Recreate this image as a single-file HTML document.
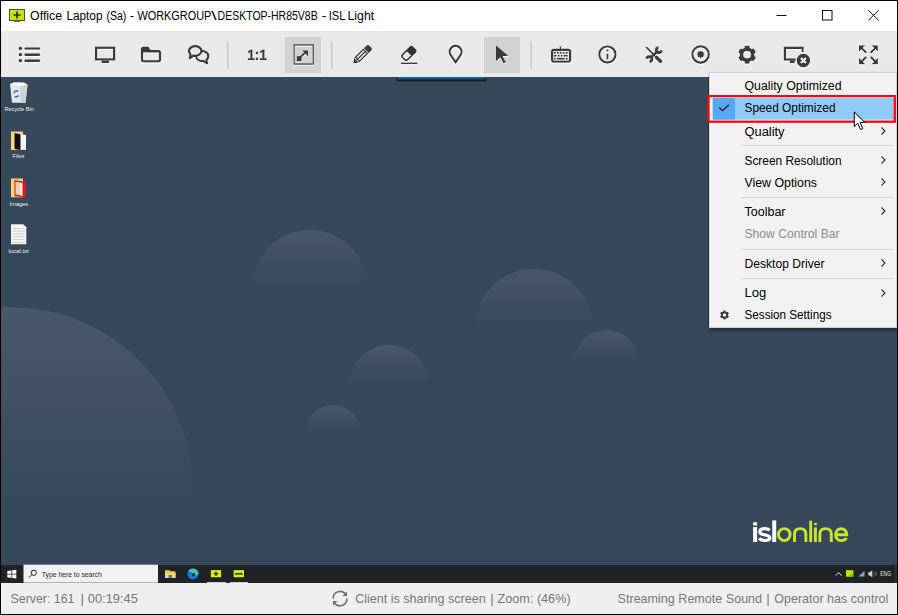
<!DOCTYPE html>
<html><head><meta charset="utf-8">
<style>
*{margin:0;padding:0}
html,body{width:898px;height:615px;overflow:hidden;background:#000}
svg{position:absolute;left:0;top:0;display:block}
text{font-family:"Liberation Sans",sans-serif}
</style></head><body>
<svg width="898" height="615" viewBox="0 0 898 615">
<defs>
  <clipPath id="deskclip"><rect x="1" y="77" width="896" height="488"/></clipPath>
  <linearGradient id="bub" x1="0" y1="0" x2="0" y2="1">
    <stop offset="0" stop-color="#d8d0e8" stop-opacity="0.11"/>
    <stop offset="0.25" stop-color="#d8d0e8" stop-opacity="0.05"/>
    <stop offset="0.5" stop-color="#d8d0e8" stop-opacity="0"/>
  </linearGradient>
  <linearGradient id="bub2" x1="0" y1="0" x2="0" y2="1">
    <stop offset="0" stop-color="#d8d0e8" stop-opacity="0.11"/>
    <stop offset="0.3" stop-color="#d8d0e8" stop-opacity="0.05"/>
    <stop offset="0.55" stop-color="#d8d0e8" stop-opacity="0"/>
  </linearGradient>
  <linearGradient id="bar" x1="0" y1="0" x2="0" y2="1">
    <stop offset="0" stop-color="#1d7bc0"/>
    <stop offset="1" stop-color="#052a48"/>
  </linearGradient>
  <filter id="halo" x="-20%" y="-20%" width="140%" height="140%">
    <feMorphology in="SourceAlpha" operator="dilate" radius="0.4" result="d"/>
    <feOffset in="d" dy="0.9" result="o"/>
    <feGaussianBlur in="o" stdDeviation="0.45" result="b"/>
    <feFlood flood-color="#ffffff" flood-opacity="0.9"/>
    <feComposite in2="b" operator="in" result="w"/>
    <feMerge><feMergeNode in="w"/><feMergeNode in="SourceGraphic"/></feMerge>
  </filter>
  <filter id="shadow" x="-10%" y="-10%" width="130%" height="130%">
    <feGaussianBlur in="SourceAlpha" stdDeviation="1.5"/>
    <feOffset dx="1" dy="2"/>
    <feComponentTransfer><feFuncA type="linear" slope="0.45"/></feComponentTransfer>
    <feMerge><feMergeNode/><feMergeNode in="SourceGraphic"/></feMerge>
  </filter>
</defs>

<!-- ===== TITLE BAR ===== -->
<rect x="1" y="1" width="896" height="30" fill="#ffffff"/>
<g>
  <rect x="9.5" y="9.5" width="15" height="11" fill="#c5e500" stroke="#4a4a4a" stroke-width="1"/>
  <rect x="14" y="20.5" width="6" height="1.3" fill="#4a4a4a"/>
  <path d="M17 11.5v7M13.5 15h7" stroke="#2a2a10" stroke-width="1.6"/>
</g>
<g font-size="12.5" fill="#000">
  <text x="30.1" y="20" textLength="32.0" lengthAdjust="spacingAndGlyphs">Office</text>
  <text x="66.4" y="20" textLength="36.1" lengthAdjust="spacingAndGlyphs">Laptop</text>
  <text x="106.4" y="20" textLength="20.0" lengthAdjust="spacingAndGlyphs">(Sa)</text>
  <text x="129.7" y="20" textLength="4.3" lengthAdjust="spacingAndGlyphs">-</text>
  <text x="137.4" y="20" textLength="74.0" lengthAdjust="spacingAndGlyphs">WORKGROUP</text>
  <text x="211.2" y="20" textLength="5.4" lengthAdjust="spacingAndGlyphs">\</text>
  <text x="217.6" y="20" textLength="100.1" lengthAdjust="spacingAndGlyphs">DESKTOP-HR85V8B</text>
  <text x="321.8" y="20" textLength="4.6" lengthAdjust="spacingAndGlyphs">-</text>
  <text x="328.7" y="20" textLength="16.7" lengthAdjust="spacingAndGlyphs">ISL</text>
  <text x="347.4" y="20" textLength="26.8" lengthAdjust="spacingAndGlyphs">Light</text>
</g>
<g stroke="#111" stroke-width="1" fill="none">
  <path d="M776.5 15.5h10"/>
  <rect x="822.5" y="10.5" width="9.5" height="9.5"/>
  <path d="M868.3 10.2l10.4 10.2M878.7 10.2l-10.4 10.2"/>
</g>

<!-- ===== TOOLBAR ===== -->
<rect x="1" y="31" width="896" height="46" fill="#e9e9e9"/>
<rect x="285" y="37" width="36" height="36" fill="#d2d2d2"/>
<rect x="484" y="37" width="36" height="36" fill="#d2d2d2"/>
<g fill="#c8c8c8">
  <rect x="227" y="41" width="1.5" height="28"/>
  <rect x="331" y="41" width="1.5" height="28"/>
  <rect x="530.5" y="41" width="1.5" height="28"/>
</g>
<g id="icons" filter="url(#halo)" fill="none" stroke="#3a3a3a" stroke-width="2.25">
  <!-- list -->
  <g fill="#3a3a3a" stroke="none">
    <circle cx="20.4" cy="48.6" r="1.75"/><circle cx="20.4" cy="54.7" r="1.75"/><circle cx="20.4" cy="60.8" r="1.75"/>
  </g>
  <path d="M25.5 48.6H39M25.5 54.7H39M25.5 60.8H39" stroke-width="2.4" stroke-linecap="round"/>
  <!-- monitor -->
  <rect x="96.1" y="47.8" width="18" height="11.7"/>
  <rect x="101.5" y="60.4" width="7.5" height="2.6" fill="#3a3a3a" stroke="none"/>
  <!-- folder -->
  <path d="M142 50V49.5Q142 47.8 143.8 47.8H147.8L149.6 51.2H158.2Q160 51.2 160 53V59.6Q160 61.4 158.2 61.4H143.8Q142 61.4 142 59.6Z" stroke-linejoin="round"/>
  <path d="M142 51.5V49.5Q142 47.8 143.8 47.8H147.8L149.6 51.2Z" fill="#3a3a3a" stroke-width="1.6"/>
  <path d="M142 51.6H160" stroke-width="1.8"/>
  <!-- chat -->
  <path d="M202.2 51.2C205.6 51.2 208.3 53.4 208.3 56.2C208.3 57.7 207.6 59 206.4 59.9L207 63.4L203.6 61.1C203.1 61.2 202.7 61.2 202.2 61.2C198.8 61.2 196.1 59 196.1 56.2C196.1 53.4 198.8 51.2 202.2 51.2Z" stroke-linejoin="round"/>
  <path d="M195.2 46.1C198.7 46.1 201.5 48.3 201.5 51C201.5 53.7 198.7 55.9 195.2 55.9C194.5 55.9 193.8 55.8 193.2 55.7L189.9 58.4L190.4 54.3C189.5 53.5 188.9 52.3 188.9 51C188.9 48.3 191.7 46.1 195.2 46.1Z" fill="#e9e9e9" stroke-linejoin="round"/>
  <!-- 1:1 -->
  <text x="247.2" y="60.4" font-size="15.5" font-weight="bold" fill="#3a3a3a" stroke="#3a3a3a" stroke-width="0.5" textLength="19.5" lengthAdjust="spacingAndGlyphs">1:1</text>
  <!-- fit -->
  <rect x="294.1" y="45" width="19.1" height="19.1" stroke="#505050" stroke-width="1.5"/>
  <rect x="296.8" y="56.2" width="4.8" height="5.2" fill="#3a3a3a" stroke="none"/>
  <path d="M300.5 57.2L305 52.7" stroke-width="2"/>
  <path d="M302.2 50.6H308V56.4Z" fill="#3a3a3a" stroke="none"/>
  <!-- pencil -->
  <g transform="translate(353.2 63.6) rotate(-44.5) scale(0.94)">
    <path d="M0 0L5 -3.6V3.6Z" fill="#3a3a3a" stroke="none"/>
    <rect x="6.3" y="-3" width="12" height="6" stroke-width="1.6"/>
    <path d="M6.3 0H18.3" stroke-width="1.6"/>
    <path d="M19.5 -3.7H23.5Q25.6 -3.7 25.6 -1.6V1.6Q25.6 3.7 23.5 3.7H19.5Z" fill="#3a3a3a" stroke="none"/>
  </g>
  <!-- eraser -->
  <g transform="translate(408.9 53.5) rotate(-45)">
    <path d="M0 -4.4H5.6Q7.8 -4.4 7.8 -2.2V2.2Q7.8 4.4 5.6 4.4H0Z" fill="#333" stroke="none"/>
    <path d="M0.5 -3.6H-5.2Q-7.4 -3.6 -7.4 -1.4V1.4Q-7.4 3.6 -5.2 3.6H0.5" stroke-width="1.7"/>
  </g>
  <path d="M401 63.4H417.4" stroke-width="1.5"/>
  <!-- pin -->
  <path d="M455.6 62.5L450.6 55A5.9 5.9 0 1 1 460.6 55Z" stroke-linejoin="round"/>
  <!-- pointer -->
  <path d="M496 45.5L508.2 55.8L502.6 56.3L505.8 62.2L503.5 63.4L500.3 57.4L496 61.2Z" fill="#3a3a3a" stroke="none"/>
  <!-- keyboard -->
  <rect x="552.1" y="49.8" width="18" height="11.9" rx="2"/>
  <path d="M560.4 46.5V49" stroke-width="1.4"/>
  <g fill="#3a3a3a" stroke="none">
    <rect x="553.9" y="51.9" width="1.9" height="1.9"/><rect x="556.9" y="51.9" width="1.9" height="1.9"/><rect x="559.8" y="51.9" width="1.9" height="1.9"/><rect x="562.7" y="51.9" width="1.9" height="1.9"/><rect x="565.8" y="51.9" width="1.9" height="1.9"/>
    <rect x="553.9" y="54.8" width="2.6" height="1.9"/><rect x="557.7" y="54.8" width="1.9" height="1.9"/><rect x="560.7" y="54.8" width="1.9" height="1.9"/><rect x="563.7" y="54.8" width="3.9" height="1.9"/>
    <rect x="553.9" y="57.8" width="1.9" height="1.9"/><rect x="557" y="57.8" width="7.6" height="1.9"/><rect x="565.8" y="57.8" width="1.9" height="1.9"/>
  </g>
  <!-- info -->
  <circle cx="607.4" cy="54.6" r="8.1" stroke-width="2.2"/>
  <circle cx="607.4" cy="50.5" r="1.1" fill="#3a3a3a" stroke="none"/>
  <rect x="606.5" y="53.8" width="1.9" height="5.8" fill="#3a3a3a" stroke="none"/>
  <!-- tools -->
  <path d="M646.6 47.6L654.3 55.3" stroke-width="1.7" stroke-linecap="round"/>
  <path d="M656.3 57.3L660.5 61.5" stroke-width="3.4" stroke-linecap="round"/>
  <path d="M651.2 57.3L656.9 52.1" stroke-width="2.6"/>
  <path d="M661.29 50.43A2.5 2.5 0 1 1 658.57 47.71" stroke-width="2.9"/>
  <path d="M646.81 58.97A2.5 2.5 0 1 1 649.53 61.69" stroke-width="2.9"/>
  <!-- record -->
  <circle cx="700.6" cy="54.6" r="8.2" stroke-width="2.2"/>
  <circle cx="700.6" cy="54.6" r="3.3" fill="#3a3a3a" stroke="none"/>
  <!-- gear -->
  <path fill="#3a3a3a" stroke="none" fill-rule="evenodd" d="M744.48 47.98L744.77 46.11A9.0 9.0 0 0 1 749.43 46.11L749.72 47.98A7.3 7.3 0 0 1 751.69 49.13L751.69 49.13L753.46 48.44A9.0 9.0 0 0 1 755.79 52.47L754.31 53.66A7.3 7.3 0 0 1 754.31 55.94L754.31 55.94L755.79 57.13A9.0 9.0 0 0 1 753.46 61.16L751.69 60.47A7.3 7.3 0 0 1 749.72 61.62L749.72 61.62L749.43 63.49A9.0 9.0 0 0 1 744.77 63.49L744.48 61.62A7.3 7.3 0 0 1 742.51 60.47L742.51 60.47L740.74 61.16A9.0 9.0 0 0 1 738.41 57.13L739.89 55.94A7.3 7.3 0 0 1 739.89 53.66L739.89 53.66L738.41 52.47A9.0 9.0 0 0 1 740.74 48.44L742.51 49.13A7.3 7.3 0 0 1 744.48 47.98ZM750.90 54.80A3.8 3.8 0 1 0 743.30 54.80A3.8 3.8 0 1 0 750.90 54.80Z"/>
  <!-- screen x -->
  <path d="M797 59.5H784.9V47.8H802.6V52"/>
  <rect x="789.7" y="60.4" width="5.1" height="2.7" fill="#3a3a3a" stroke="none"/>
  <circle cx="803.4" cy="60.5" r="7.3" fill="#3a3a3a" stroke="#e9e9e9" stroke-width="1.3"/>
  <path d="M800.9 58L805.9 63M805.9 58L800.9 63" stroke="#fff" stroke-width="2"/>
  <!-- fullscreen -->
  <g fill="#3a3a3a" stroke="none">
    <path d="M859 45.6H865.2L859 51.8Z"/><path d="M877.9 45.6H871.7L877.9 51.8Z"/>
    <path d="M859 64.2H865.2L859 58Z"/><path d="M877.9 64.2H871.7L877.9 58Z"/>
  </g>
  <path d="M861 47.6L865.7 52.3M875.9 47.6L871.2 52.3M861 62.2L865.7 57.5M875.9 62.2L871.2 57.5" stroke-width="2" stroke-linecap="round"/>
</g>

<!-- ===== DESKTOP ===== -->
<rect x="1" y="77" width="896" height="488" fill="#37485a"/>
<g fill="url(#bub)" clip-path="url(#deskclip)">
  <circle cx="10" cy="490" r="183" fill="url(#bub2)"/>
  <circle cx="310" cy="288" r="58"/>
  <circle cx="534" cy="328" r="59"/>
  <circle cx="389" cy="385" r="40"/>
  <circle cx="607" cy="363" r="33"/>
  <circle cx="333" cy="433" r="28"/>
</g>
<rect x="396.3" y="77" width="90" height="4.2" rx="1.5" fill="#0a0f14" fill-opacity="0.75"/>
<rect x="397" y="77.3" width="88.5" height="2.6" rx="1.2" fill="url(#bar)"/>

<!-- desktop icons -->
<g id="deskicons">
  <!-- recycle bin -->
  <path d="M10 84L27.5 84.5L25.5 102.7H12Z" fill="#e6e8ea"/>
  <path d="M10 84L14 82.3L24 82.5L27.5 84.5L19 86Z" fill="#f8f8f8"/>
  <path d="M20 86.3L27.5 84.5L25.5 102.7L20.5 102.7Z" fill="#cfd2d5"/>
  <path d="M14 93.3A2.6 2.6 0 0 1 18.3 91.5M18.6 95.4A2.6 2.6 0 0 1 14.6 96.3" fill="none" stroke="#1a7fe6" stroke-width="1.6"/>
  <text x="4.4" y="111.4" font-size="6" fill="#f0f0f0" textLength="29.4" lengthAdjust="spacingAndGlyphs">Recycle Bin</text>
  <!-- files -->
  <path d="M11 131.5H23V150H11Z" fill="#f5d77a"/>
  <path d="M14.5 133L26 135V150L14.5 149Z" fill="#f7f7f7"/>
  <path d="M14.5 133L20.5 134.3V150L14.5 149Z" fill="#111"/>
  <text x="12.6" y="158" font-size="6" fill="#f0f0f0" textLength="11.6" lengthAdjust="spacingAndGlyphs">Files</text>
  <!-- images -->
  <path d="M11 178.5H23V197.3H11Z" fill="#f5d77a"/>
  <path d="M14.5 180L26 182V197.3L14.5 196.3Z" fill="#e01818"/>
  <path d="M15.5 181.5L21.5 183V195.5L15.5 194.5Z" fill="#f4d0b0"/>
  <path d="M20.5 182.5L22.5 183V196L20.5 195.5Z" fill="#fff"/>
  <text x="9.6" y="206.2" font-size="6" fill="#f0f0f0" textLength="18.6" lengthAdjust="spacingAndGlyphs">Images</text>
  <!-- local.txt -->
  <path d="M11 224.3H23.3L26.3 227.3V244.3H11Z" fill="#f4f4f4"/>
  <g fill="#c4c4c4"><rect x="12.5" y="228" width="12" height="0.7"/><rect x="12.5" y="230.8" width="12" height="0.7"/><rect x="12.5" y="233.6" width="12" height="0.7"/><rect x="12.5" y="236.4" width="12" height="0.7"/><rect x="12.5" y="239.2" width="12" height="0.7"/><rect x="12.5" y="242" width="12" height="0.7"/></g>
  <text x="8.4" y="252.6" font-size="6" fill="#f0f0f0" textLength="20.4" lengthAdjust="spacingAndGlyphs">local.txt</text>
</g>

<!-- logo -->
<g id="logo" fill="none" stroke-linecap="butt">
  <g fill="#ffffff">
    <rect x="753.1" y="522.2" width="4" height="3.4" rx="0.6"/>
    <rect x="753.1" y="527" width="4" height="15"/>
    <rect x="772.3" y="520.4" width="3.9" height="21.6"/>
  </g>
  <path d="M769.6 530.4C768.6 529.3 766.8 528.7 764.6 528.7C761.7 528.7 759.8 529.9 759.8 531.9C759.8 536.1 769.9 533.6 769.9 537.8C769.9 539.6 768 540.5 764.9 540.5C762.5 540.5 760.4 539.8 759 538.4" stroke="#ffffff" stroke-width="3.2"/>
  <g stroke="#c8e62a" stroke-width="2.9">
    <ellipse cx="784.3" cy="534.6" rx="5.8" ry="6"/>
    <path d="M794.5 542V534C794.5 530.3 796.9 528.6 800.2 528.6C803.5 528.6 805.9 530.3 805.9 534V542"/>
    <path d="M810.7 520.7V542"/>
    <path d="M815.4 527.4V542"/>
    <path d="M819.9 542V534C819.9 530.3 822.3 528.6 825.6 528.6C828.9 528.6 831.3 530.3 831.3 534V542"/>
    <path d="M835.9 534.7H846.7C846.7 530.9 844.3 528.7 841.2 528.7C837.9 528.7 835.7 531.2 835.7 534.7C835.7 538.2 838 540.6 841.3 540.6C843.6 540.6 845.4 539.7 846.6 538"/>
  </g>
  <rect x="814" y="523" width="2.8" height="2.2" fill="#c8e62a"/>
</g>

<!-- ===== TASKBAR ===== -->
<rect x="1" y="565" width="893" height="18" fill="#1e2327"/>
<rect x="894" y="565" width="3" height="18" fill="#2b2f33"/>
<g id="taskbar">
  <rect x="23.5" y="564.7" width="134.5" height="18" fill="#f3f1f3"/>
  <g fill="#ffffff">
    <path d="M7.3 571L11.5 570.4V573.8H7.3Z"/><path d="M12.2 570.3L16.3 569.7V573.8H12.2Z"/>
    <path d="M7.3 574.5H11.5V577.9L7.3 577.3Z"/><path d="M12.2 574.5H16.3V578.6L12.2 578Z"/>
  </g>
  <g fill="none" stroke="#2a2a2a" stroke-width="1">
    <circle cx="33.8" cy="572.8" r="2.6"/><path d="M31.9 574.7L29 577.6"/>
  </g>
  <text x="41.8" y="577.2" font-size="8" fill="#2a2a2a" textLength="60" lengthAdjust="spacingAndGlyphs">Type here to search</text>
  <!-- explorer -->
  <path d="M165 570.2H169.5L170.5 571.2H175.5V578H165Z" fill="#f3c54a"/>
  <rect x="165" y="573" width="10.5" height="5" fill="#ffd866"/>
  <rect x="168.5" y="575" width="3.5" height="3" fill="#1f8ce0"/>
  <!-- edge -->
  <circle cx="193" cy="573.8" r="5.6" fill="#1676d6"/>
  <path d="M188 572.2A5.4 5.4 0 0 1 198.4 573.5C198 575.2 196.5 575.6 195 575.4C193.6 575.2 192.4 574.2 192.2 573.4C191.8 572 190 571.2 188 572.2Z" fill="#3ec7a6"/>
  <circle cx="193.6" cy="574.6" r="1.6" fill="#1e2327"/>
  <!-- isl 1 -->
  <rect x="210.3" y="569.6" width="11.4" height="8.2" fill="#0c0c30"/>
  <rect x="210.8" y="570.1" width="10.4" height="7.2" fill="#d8f200"/>
  <path d="M216 571.5V576M213.6 573.75H218.4" stroke="#3d3d10" stroke-width="1.5"/>
  <rect x="207" y="582" width="19" height="1" fill="#c8cacc"/>
  <!-- isl 2 -->
  <rect x="233.1" y="569.6" width="11.4" height="8.2" fill="#0c0c30"/>
  <rect x="233.6" y="570.1" width="10.4" height="7.2" fill="#d8f200"/>
  <path d="M235.8 573V574.8L237 574.3H240.8L242 574.8V573L240.8 573.4H237Z" fill="#222" stroke="#222" stroke-width="0.6"/>
  <rect x="230" y="582" width="18" height="1" fill="#c8cacc"/>
  <!-- tray -->
  <path d="M835.8 575.6L838.7 572.6L841.6 575.6" fill="none" stroke="#e6e6e6" stroke-width="1"/>
  <rect x="846" y="570.2" width="7.4" height="6.5" fill="#c8e000"/>
  <circle cx="851.3" cy="575.2" r="1.8" fill="#6bd000"/>
  <path d="M858.3 576.6L864.5 570.8V576.6Z" fill="#9aa0a6"/>
  <path d="M868.3 572.2H870L872.3 570.2V577.4L870 575.4H868.3Z" fill="#d0d0d0"/>
  <path d="M874 572.3Q875.4 573.8 874 575.3M875.5 571.3Q877.6 573.8 875.5 576.3" fill="none" stroke="#8a8a8a" stroke-width="0.7"/>
  <text x="880.2" y="576.3" font-size="6.3" fill="#e8e8e8" textLength="11" lengthAdjust="spacingAndGlyphs">ENG</text>
</g>

<!-- ===== STATUS BAR ===== -->
<rect x="1" y="583" width="896" height="31" fill="#efefef"/>
<g font-size="13.5" fill="#787878">
  <text x="10.5" y="603.3" textLength="64" lengthAdjust="spacingAndGlyphs">Server: 161</text>
  <text x="80.5" y="603.3">|</text>
  <text x="87.8" y="603.3" textLength="50" lengthAdjust="spacingAndGlyphs">00:19:45</text>
  <text x="355.2" y="603" textLength="130.5" lengthAdjust="spacingAndGlyphs">Client is sharing screen</text>
  <text x="490.2" y="603">|</text>
  <text x="497.6" y="603" textLength="73" lengthAdjust="spacingAndGlyphs">Zoom: (46%)</text>
  <text x="617.6" y="602.8" textLength="144.5" lengthAdjust="spacingAndGlyphs">Streaming Remote Sound</text>
  <text x="766.3" y="602.8">|</text>
  <text x="774.3" y="602.8" textLength="114" lengthAdjust="spacingAndGlyphs">Operator has control</text>
</g>
<g id="sync" fill="none" stroke="#707070" stroke-width="1.5">
  <path d="M333.3 598.8A6.8 6.8 0 0 1 345.8 594.6"/>
  <path d="M346.8 598.3A6.8 6.8 0 0 1 334.3 602.6"/>
  <path d="M347 591.6V596H342.6Z" fill="#707070" stroke="none"/>
  <path d="M333 605.5V601.1H337.4Z" fill="#707070" stroke="none"/>
</g>

<!-- ===== MENU ===== -->
<g id="menu">
  <rect x="709.5" y="72.5" width="187" height="255" fill="#f2f2f2" stroke="#cfcfcf" stroke-width="1" filter="url(#shadow)"/>
  <path d="M710.5 327V73.5H896" fill="none" stroke="#fafafa" stroke-width="1"/>
  <rect x="708" y="77" width="1" height="251" fill="#000" fill-opacity="0.2"/>
  <rect x="712.8" y="97.9" width="181" height="21.7" fill="#91c9f7"/>
  <rect x="712.8" y="97.9" width="22.2" height="21.7" fill="#55a9f2"/>
  <path d="M719.3 107.6L722.5 110.6L728.9 104.9" fill="none" stroke="#2b2b2b" stroke-width="1.5"/>
  <rect x="708.4" y="96.1" width="186.4" height="25.6" fill="none" stroke="#ff0000" stroke-width="2.2"/>
  <g fill="#d7d7d7">
    <rect x="741" y="145" width="153" height="1"/>
    <rect x="741" y="197" width="153" height="1"/>
    <rect x="741" y="249" width="153" height="1"/>
    <rect x="741" y="278" width="153" height="1"/>
  </g>
  <g font-size="12.5" fill="#000">
    <text x="744.5" y="90.3" textLength="97" lengthAdjust="spacingAndGlyphs">Quality Optimized</text>
    <text x="744.5" y="112.3" textLength="91" lengthAdjust="spacingAndGlyphs">Speed Optimized</text>
    <text x="744.5" y="135.5" textLength="40" lengthAdjust="spacingAndGlyphs">Quality</text>
    <text x="744.5" y="164.5" textLength="97" lengthAdjust="spacingAndGlyphs">Screen Resolution</text>
    <text x="744.5" y="186.6" textLength="72.5" lengthAdjust="spacingAndGlyphs">View Options</text>
    <text x="744.5" y="216" textLength="41" lengthAdjust="spacingAndGlyphs">Toolbar</text>
    <text x="744.5" y="238.3" fill="#8d8d8d" textLength="95" lengthAdjust="spacingAndGlyphs">Show Control Bar</text>
    <text x="744.5" y="267.9" textLength="80" lengthAdjust="spacingAndGlyphs">Desktop Driver</text>
    <text x="744.5" y="297" textLength="21.8" lengthAdjust="spacingAndGlyphs">Log</text>
    <text x="744.5" y="319.1" textLength="87" lengthAdjust="spacingAndGlyphs">Session Settings</text>
  </g>
  <g fill="none" stroke="#333" stroke-width="1.1">
    <path d="M881.5 127.5L885 131L881.5 134.5"/>
    <path d="M881.5 156.5L885 160L881.5 163.5"/>
    <path d="M881.5 178.5L885 182L881.5 185.5"/>
    <path d="M881.5 207.5L885 211L881.5 214.5"/>
    <path d="M881.5 259.5L885 263L881.5 266.5"/>
    <path d="M881.5 289.5L885 293L881.5 296.5"/>
  </g>
  <path fill="#3a3a3a" fill-rule="evenodd" d="M723.23 311.85L723.34 310.65A4.5 4.5 0 0 1 725.66 310.65L725.77 311.85A3.4 3.4 0 0 1 726.59 312.32L726.59 312.32L727.68 311.82A4.5 4.5 0 0 1 728.85 313.84L727.87 314.53A3.4 3.4 0 0 1 727.87 315.47L727.87 315.47L728.85 316.16A4.5 4.5 0 0 1 727.68 318.18L726.59 317.68A3.4 3.4 0 0 1 725.77 318.15L725.77 318.15L725.66 319.35A4.5 4.5 0 0 1 723.34 319.35L723.23 318.15A3.4 3.4 0 0 1 722.41 317.68L722.41 317.68L721.32 318.18A4.5 4.5 0 0 1 720.15 316.16L721.13 315.47A3.4 3.4 0 0 1 721.13 314.53L721.13 314.53L720.15 313.84A4.5 4.5 0 0 1 721.32 311.82L722.41 312.32A3.4 3.4 0 0 1 723.23 311.85ZM726.20 315.00A1.7 1.7 0 1 0 722.80 315.00A1.7 1.7 0 1 0 726.20 315.00Z"/>
  <!-- cursor -->
  <path d="M854.3 112V126.6L857.8 123.3L860.6 129.6L862.8 128.6L860.1 122.4H864.9Z" fill="#fff" stroke="#000" stroke-width="1" stroke-linejoin="miter"/>
</g>
</svg>
</body></html>
